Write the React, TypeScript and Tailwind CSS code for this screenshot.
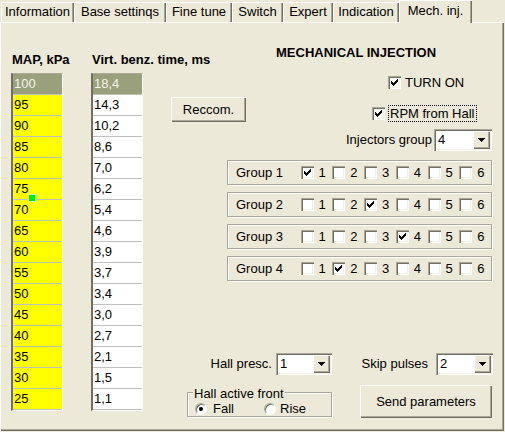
import React from "react";

const sunken =
  "shadow-[inset_1px_1px_0_#ACA899,inset_2px_2px_0_#716F64,inset_-1px_-1px_0_#fff,inset_-2px_-2px_0_#F1EFE2]";
const raised =
  "shadow-[inset_1px_1px_0_#fff,inset_-1px_-1px_0_#716F64,inset_-2px_-2px_0_#ACA899]";
const etched = "border border-[#ACA899] shadow-[inset_1px_1px_0_#fff,1px_1px_0_#fff]";

function Check({ on }: { on?: boolean }) {
  return (
    <span className={`relative block w-[13px] h-[13px] shrink-0 bg-white ${sunken}`}>
      {on && (
        <svg
          className="absolute left-0 top-0"
          width="13"
          height="13"
          viewBox="0 0 13 13"
          shapeRendering="crispEdges"
        >
          {[
            [3, 5],
            [4, 6],
            [5, 7],
            [6, 6],
            [7, 5],
            [8, 4],
            [9, 3],
          ].map(([x, y]) => (
            <rect key={x} x={x} y={y} width="1" height="3" fill="#000" />
          ))}
        </svg>
      )}
    </span>
  );
}

function Combo({ v, w }: { v: string; w: string }) {
  return (
    <div className={`flex h-[22px] ${w} shrink-0 bg-white p-[2px] ${sunken}`}>
      <span className="flex-1 pl-[2px] leading-[18px]">{v}</span>
      <span className={`flex w-[17px] h-[18px] items-center justify-center bg-[#ECE9D8] ${raised}`}>
        <svg width="7" height="4" viewBox="0 0 7 4" shapeRendering="crispEdges">
          <path d="M0 0h7v1h-1v1h-1v1h-1v1h-1v-1h-1v-1h-1v-1h-1z" fill="#000" />
        </svg>
      </span>
    </div>
  );
}

function Radio({ on }: { on?: boolean }) {
  return (
    <span className="relative flex w-[12px] h-[12px] shrink-0 items-center justify-center rounded-full bg-white border border-t-[#ACA899] border-l-[#ACA899] border-r-white border-b-white shadow-[inset_1px_1px_0_#716F64]">
      {on && <span className="w-[4px] h-[4px] rounded-full bg-black" />}
    </span>
  );
}

const maps = ["100", "95", "90", "85", "80", "75", "70", "65", "60", "55", "50", "45", "40", "35", "30", "25"];
const times = ["18,4", "14,3", "10,2", "8,6", "7,0", "6,2", "5,4", "4,6", "3,9", "3,7", "3,4", "3,0", "2,7", "2,1", "1,5", "1,1"];

function Table({ vals, yellow, marker }: { vals: string[]; yellow?: boolean; marker?: boolean }) {
  return (
    <div className="relative w-[52px] border-l-2 border-l-[#716F64] border-t border-t-[#ACA899] border-r border-r-white border-b border-b-white">
      {vals.map((v, i) => (
        <div
          key={i}
          className={`h-[21px] border-b border-b-[#C0C0C0] pl-[1px] leading-[20px] ${
            i === 0 ? "bg-[#9AA07C] text-[#F4F4EA]" : yellow ? "bg-[#FFFF00]" : "bg-white"
          }`}
        >
          {v}
        </div>
      ))}
      {marker && (
        <span className="absolute left-[15px] top-[120px] w-[8px] h-[8px] bg-[#00F000] border border-[#C0FFC0]" />
      )}
    </div>
  );
}

const tabs: [string, string][] = [
  ["Information", "w-[73px]"],
  ["Base settinqs", "w-[92px]"],
  ["Fine tune", "w-[66px]"],
  ["Switch", "w-[51px]"],
  ["Expert", "w-[50px]"],
  ["Indication", "w-[66px]"],
];

function GroupRow({ n, on }: { n: number; on: number }) {
  return (
    <div className={`flex h-[25px] w-[265px] items-center pl-[8px] ${etched}`}>
      <span className="w-[65px] whitespace-nowrap">Group {n}</span>
      {[1, 2, 3, 4, 5, 6].map((k) => (
        <span key={k} className="flex w-[32px] items-center gap-[5px]">
          <Check on={k === on} />
          <span>{k}</span>
        </span>
      ))}
    </div>
  );
}

export default function App() {
  return (
    <div className="w-[505px] h-[432px] overflow-hidden bg-[#ECE9D8] text-[13px] text-black font-['Liberation_Sans',Arial,sans-serif] leading-[14px]">
      {/* tabs */}
      <div className="flex h-[22px] items-end pl-[1px]">
        {tabs.map(([t, w]) => (
          <div
            key={t}
            className={`${w} h-[20px] pt-[3px] text-center whitespace-nowrap shadow-[inset_1px_1px_0_#fff,inset_-1px_0_0_#716F64,inset_-2px_0_0_#ACA899]`}
          >
            {t}
          </div>
        ))}
        <div className="relative z-10 -mb-[1px] w-[73px] h-[23px] pt-[4px] text-center whitespace-nowrap bg-[#ECE9D8] shadow-[inset_1px_1px_0_#fff,inset_-1px_0_0_#716F64,inset_-2px_0_0_#ACA899]">
          Mech. inj.
        </div>
      </div>

      {/* panel */}
      <div className="flex w-[504px] h-[409px] shadow-[inset_1px_1px_0_#fff,inset_-1px_-1px_0_#716F64,inset_-2px_-2px_0_#ACA899]">
        {/* left tables */}
        <div className="flex w-[143px] shrink-0 gap-[28px] pl-[11px] pt-[31px]">
          <div className="flex w-[52px] shrink-0 flex-col">
            <div className="h-[14px] pl-[1px] font-bold whitespace-nowrap">MAP, kPa</div>
            <div className="mt-[6px]">
              <Table vals={maps} yellow marker />
            </div>
          </div>
          <div className="flex w-[52px] shrink-0 flex-col">
            <div className="h-[14px] pl-[1px] font-bold whitespace-nowrap">Virt. benz. time, ms</div>
            <div className="mt-[6px]">
              <Table vals={times} />
            </div>
          </div>
        </div>

        {/* right side */}
        <div className="flex w-[361px] shrink-0 flex-col pt-[24px]">
          <div className="ml-[133px] h-[14px] font-bold whitespace-nowrap">MECHANICAL INJECTION</div>

          <div className="mt-[16px] ml-[245px] flex h-[13px] items-center gap-[4px]">
            <Check on />
            <span>TURN ON</span>
          </div>

          <div className="mt-[8px] flex h-[25px] items-start">
            <button className={`ml-[28px] w-[75px] h-[25px] shrink-0 bg-[#ECE9D8] text-center ${raised}`}>Reccom.</button>
            <div className="ml-[126px] mt-[8px] flex h-[17px] items-center gap-[3px]">
              <Check on />
              <span className="h-[17px] border border-dotted border-black px-[1px] leading-[15px] whitespace-nowrap">
                RPM from Hall
              </span>
            </div>
          </div>

          <div className="mt-[7px] flex items-center justify-end gap-[2px] pr-[12px]">
            <span className="whitespace-nowrap">Injectors group</span>
            <Combo v="4" w="w-[58px]" />
          </div>

          <div className="mt-[9px] ml-[84px] flex flex-col gap-[7px]">
            <GroupRow n={1} on={1} />
            <GroupRow n={2} on={3} />
            <GroupRow n={3} on={4} />
            <GroupRow n={4} on={2} />
          </div>

          <div className="mt-[72px] flex">
            <div className="ml-[44px] flex w-[145px] shrink-0 flex-col">
              <div className="flex items-center justify-end gap-[4px]">
                <span className="whitespace-nowrap">Hall presc.</span>
                <Combo v="1" w="w-[56px]" />
              </div>
              <div className={`relative mt-[17px] h-[25px] ${etched}`}>
                <span className="absolute left-[5px] -top-[6px] bg-[#ECE9D8] px-[1px] leading-[14px] whitespace-nowrap">
                  Hall active front
                </span>
                <div className="mt-[9px] flex h-[13px] items-center pl-[7px]">
                  <span className="flex w-[69px] items-center gap-[6px]">
                    <Radio on />
                    <span>Fall</span>
                  </span>
                  <span className="flex items-center gap-[4px]">
                    <Radio />
                    <span>Rise</span>
                  </span>
                </div>
              </div>
            </div>
            <div className="ml-[28px] flex w-[133px] shrink-0 flex-col">
              <div className="flex items-center justify-end gap-[8px]">
                <span className="whitespace-nowrap">Skip pulses</span>
                <Combo v="2" w="w-[57px]" />
              </div>
              <button className={`mt-[10px] w-[132px] h-[33px] bg-[#ECE9D8] text-center ${raised}`}>
                Send parameters
              </button>
            </div>
          </div>
        </div>
      </div>
    </div>
  );
}
